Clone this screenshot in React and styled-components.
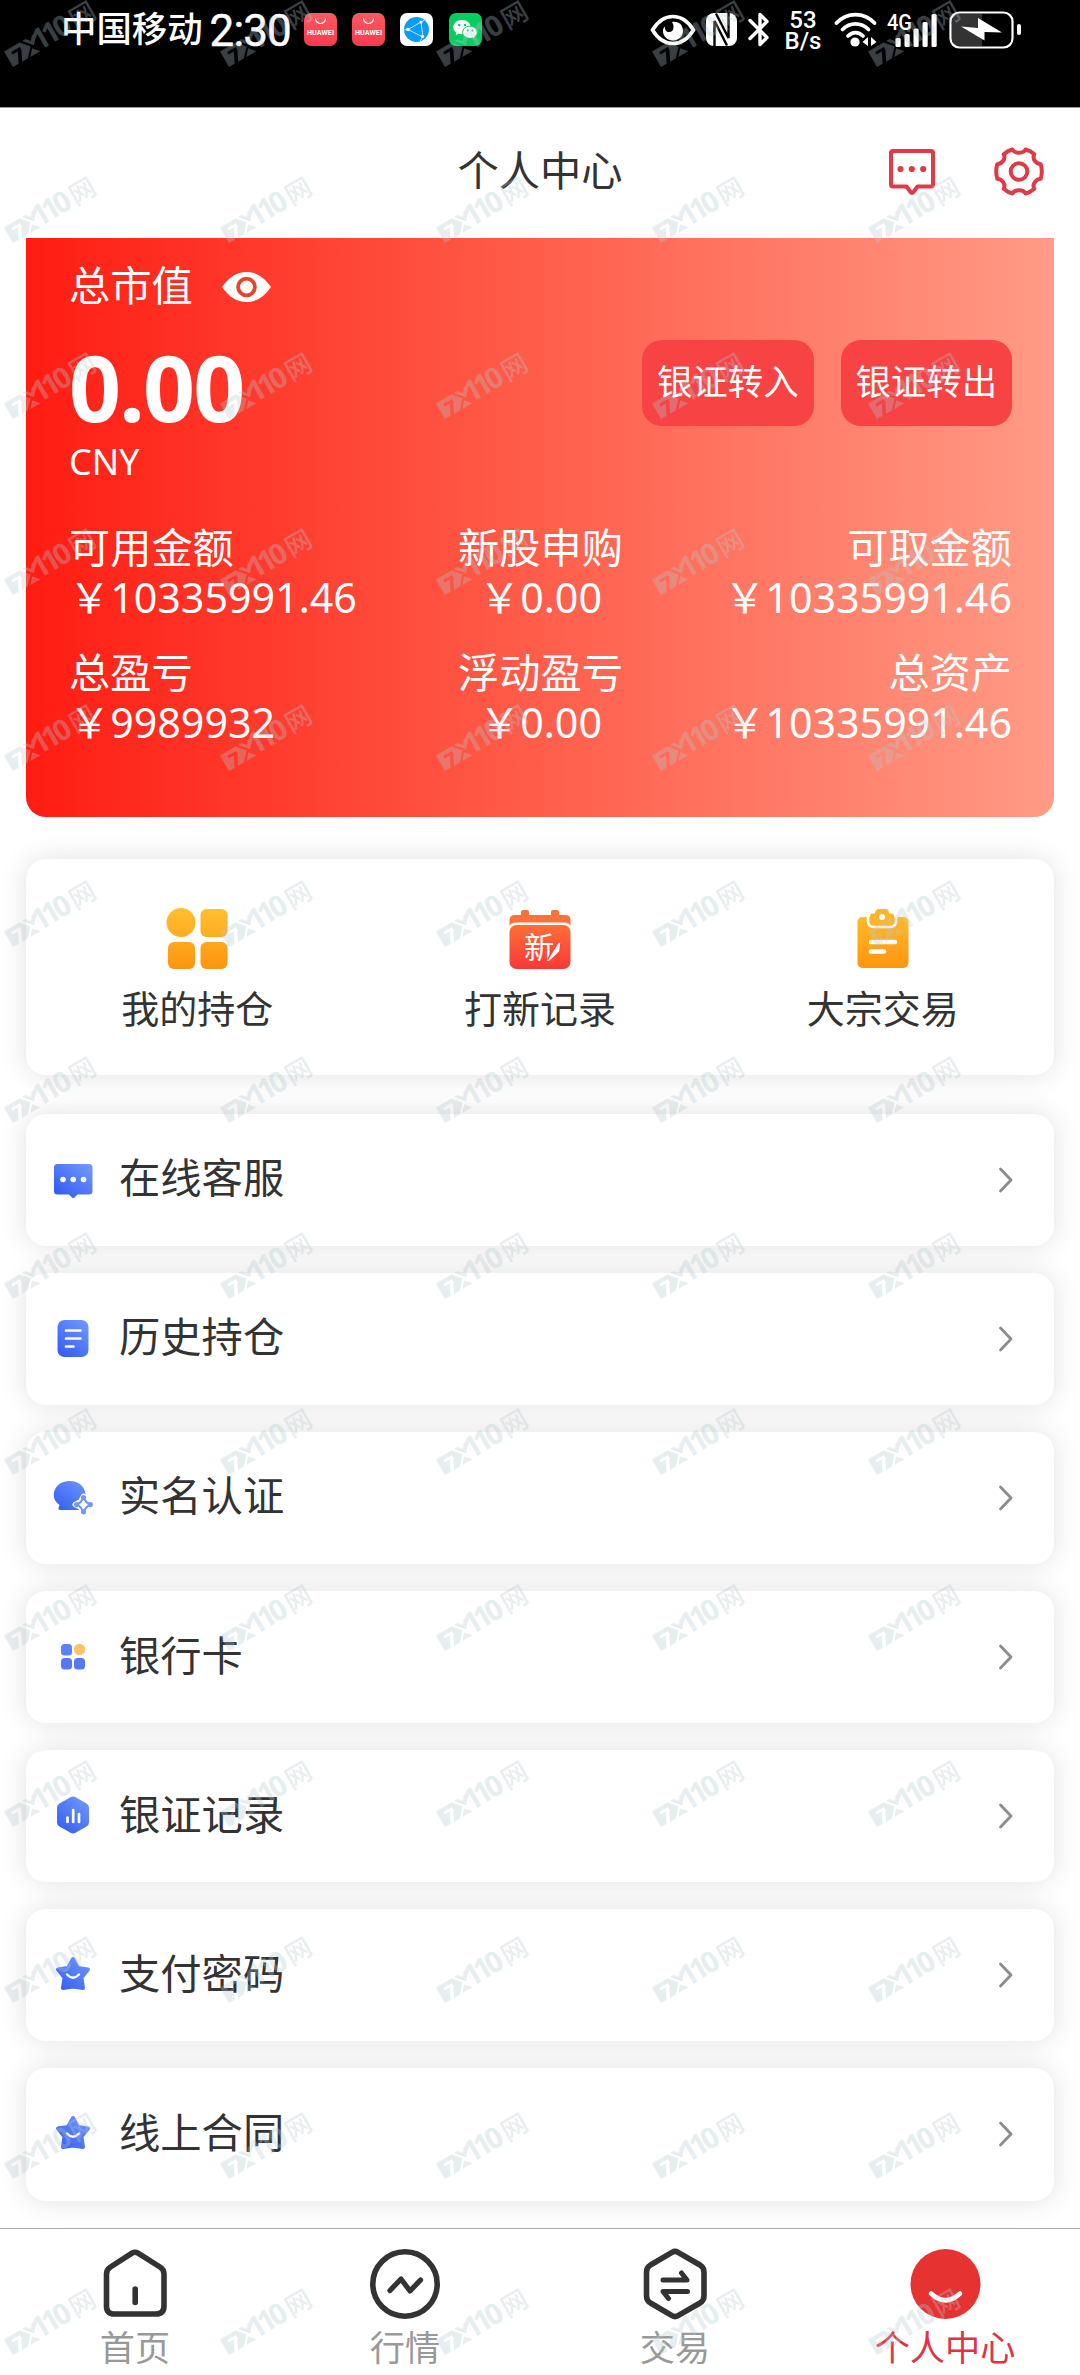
import React from 'react';
import styled, { createGlobalStyle } from 'styled-components';

const GlobalStyle = createGlobalStyle`
  *, *::before, *::after { box-sizing: border-box; }
  body {
    margin: 0;
    background: #fff;
    color: #333;
    font-family: "Noto Sans", "Noto Sans CJK SC", sans-serif;
  }
  svg { display: block; flex: none; overflow: visible; }
`;

const Page = styled.div`
  position: relative;
  width: 1080px;
  height: 2375px;
  overflow: hidden;
  display: flex;
  flex-direction: column;
  background: #fff;
`;

/* ---------- status bar ---------- */

const StatusBar = styled.div`
  height: 107px;
  flex: none;
  background: #000;
  color: #fff;
  display: flex;
  align-items: flex-start;
  justify-content: space-between;
  padding: 0 58px 0 61px;
  font-family: Roboto, "Noto Sans CJK SC", sans-serif;
`;

const StatusGroup = styled.div`
  display: flex;
  align-items: center;
  height: 59px;
`;

const Carrier = styled.span`
  font-size: 35.4px;
  font-weight: 500;
  line-height: 40px;
  margin-top: 1px;
`;

const Clock = styled.span`
  margin-left: 7px;
  width: 86px;
  font-size: 44px;
  font-weight: 400;
  -webkit-text-stroke: 0.5px #fff;
  line-height: 40px;
  letter-spacing: -0.9px;
  margin-top: 2px;
`;

const AppIcons = styled.div`
  display: flex;
  gap: 15.4px;
  margin-left: 8px;
`;

const NetSpeed = styled.div`
  display: flex;
  flex-direction: column;
  align-items: center;
  width: 38px;
  margin: 2px 12px 0 14px;
  font-size: 24px;
  font-weight: 500;
  line-height: 20.5px;
`;

const Gap = styled.span`
  width: ${(p) => p.$w}px;
`;

/* ---------- header ---------- */

const Header = styled.header`
  height: 131px;
  flex: none;
  display: grid;
  grid-template-columns: 1fr auto 1fr;
  align-items: center;
  padding: 0 36px 3px;
  border-top: 1px solid #999;
`;

const Title = styled.h1`
  grid-column: 2;
  margin: -4px 0 0;
  font-size: 41.3px;
  font-weight: 400;
  line-height: 50px;
`;

const HeaderActions = styled.div`
  display: flex;
  align-items: center;
  justify-content: flex-end;
  gap: 59px;
`;

/* ---------- balance card ---------- */

const BalanceCard = styled.section`
  height: 579px;
  flex: none;
  margin: 0 26px;
  padding: 22px 42px 0 43px;
  border-radius: 0 0 20px 20px;
  background: linear-gradient(90deg, #ff1c12 0%, #ff5e4b 50%, #ff9b86 100%);
  color: #fff;
`;

const BalanceLabel = styled.div`
  display: flex;
  align-items: center;
  gap: 29px;
  height: 50px;
  font-size: 41.3px;
  line-height: 50px;

  svg { margin-top: 3px; }
`;

const BalanceRow = styled.div`
  display: flex;
  justify-content: space-between;
  height: 116px;
  margin-top: 28px;
`;

const Balance = styled.div`
  font-size: 91px;
  font-weight: 700;
  line-height: 98px;
  letter-spacing: -1.8px;
`;

const Transfers = styled.div`
  display: flex;
  gap: 27px;
`;

const TransferButton = styled.button`
  width: 171.5px;
  height: 86px;
  margin-top: 2px;
  padding: 0 0 4px;
  border: 0;
  border-radius: 20px;
  background: #f74343;
  color: #fff;
  font-family: inherit;
  font-size: 35.4px;
  line-height: 40px;
`;

const Currency = styled.div`
  height: 50px;
  margin-top: -17px;
  font-size: 36px;
  line-height: 50px;
`;

const Stats = styled.div`
  display: grid;
  grid-template-columns: 1fr 1fr 1fr;
  row-gap: 25px;
  margin-top: 35px;
`;

const Stat = styled.div`
  font-size: 41.2px;
  line-height: 50px;
  text-align: ${(p) => p.$align};
  white-space: nowrap;
`;

/* ---------- shortcuts ---------- */

const Shortcuts = styled.section`
  display: grid;
  grid-template-columns: 1fr 1fr 1fr;
  height: 216px;
  flex: none;
  margin: 42px 26px 0;
  padding-top: 45px;
  border-radius: 20px;
  background: #fff;
  box-shadow: 0 0 28px rgba(0, 0, 0, 0.12);
`;

const Shortcut = styled.div`
  display: flex;
  flex-direction: column;
  align-items: center;
  gap: 15px;
  font-size: 38px;
  line-height: 50px;
`;

/* ---------- menu ---------- */

const Menu = styled.nav`
  display: flex;
  flex-direction: column;
  gap: 26.6px;
  margin: 38.5px 26px 0;
`;

const MenuItem = styled.div`
  display: flex;
  align-items: center;
  height: 132.5px;
  padding: 0 40px 0 27px;
  border-radius: 20px;
  background: #fff;
  box-shadow: 0 0 28px rgba(0, 0, 0, 0.12);
`;

const MenuLabel = styled.span`
  flex: 1;
  margin: -5px 0 0 26px;
  font-size: 41.3px;
  line-height: 50px;
`;

/* ---------- tab bar ---------- */

const TabBar = styled.footer`
  position: relative;
  display: grid;
  grid-template-columns: repeat(4, 1fr);
  height: 147px;
  flex: none;
  margin-top: auto;
  border-top: 1.5px solid #aaa;
  background: #fff;
`;

const Tab = styled.div`
  display: flex;
  flex-direction: column;
  align-items: center;
  padding-top: 16px;
  gap: 4px;
  font-size: 35.2px;
  line-height: 44px;
  color: ${(p) => (p.$active ? '#dc3644' : '#999')};
`;

/* ---------- watermark ---------- */

const WatermarkLayer = styled.div`
  position: absolute;
  inset: 0;
  display: grid;
  grid-template-columns: repeat(5, 216px);
  grid-auto-rows: 176px;
  pointer-events: none;
  opacity: 0.31;
`;

const WatermarkText = styled.text`
  font-family: "Open Sans", "Noto Sans CJK SC", sans-serif;
  font-weight: ${(p) => p.$weight};
  font-size: ${(p) => p.$size}px;
`;

const Watermark = () => (
  <svg width="110" height="74" viewBox="0 0 110 74" fill="#b5c9d0">
    <g transform="translate(13 67) rotate(-30)">
      <path
        fillRule="evenodd"
        d="M0 0V-18H18L25.500-9L17 0ZM6-14V-11H12L6.500 0H10.500L16-11V-14Z"
      />
      <path d="M21-18H25L28.500-13.500L32-18H38L29-8.500Z" />
      <path d="M20 0L26-6.500L31.500 0Z" />
      <WatermarkText x="30 41.500 54.500" y="-1" $size="29" $weight="700">110</WatermarkText>
      <WatermarkText x="73" y="-1" $size="26" $weight="500">网</WatermarkText>
    </g>
  </svg>
);

/* ---------- status icons ---------- */

const BagIcon = () => (
  <svg width="33" height="33" viewBox="0 0 33 33">
    <defs>
      <linearGradient id="bag" x1="0" y1="0" x2="0" y2="1">
        <stop offset="0" stopColor="#fb5a60" />
        <stop offset="1" stopColor="#f93a4c" />
      </linearGradient>
    </defs>
    <rect width="33" height="33" rx="7" fill="url(#bag)" />
    <path d="M11.500 5.500a5 5 0 0 0 10 0" fill="none" stroke="#fff" strokeWidth="1.200" />
    <text x="16.500" y="21.500" textAnchor="middle" textLength="27" lengthAdjust="spacingAndGlyphs" fontSize="6.500" fontWeight="700" fill="#fff">HUAWEI</text>
  </svg>
);

const GlobeIcon = () => (
  <svg width="33" height="33" viewBox="0 0 33 33">
    <rect width="33" height="33" rx="7" fill="#fff" />
    <circle cx="16.500" cy="16.500" r="12.500" fill="#0a9bf5" />
    <g fill="none" stroke="#bfe4ff" strokeWidth="1">
      <path d="M8 16.500L21 9L23 24Z" />
      <path d="M21 9L26 6M23 24L20 28M8 16.500L4 17" />
    </g>
    <g fill="#fff">
      <circle cx="8" cy="16.500" r="1.800" />
      <circle cx="21" cy="9" r="1.600" />
      <circle cx="22.500" cy="23.500" r="1.600" />
    </g>
  </svg>
);

const WechatIcon = () => (
  <svg width="33" height="33" viewBox="0 0 33 33">
    <rect width="33" height="33" rx="7" fill="#09cc5f" />
    <path d="M13 7c-5 0-8.700 3.200-8.700 7.200 0 2.300 1.200 4.200 3.100 5.500l-.8 2.600 3-1.500c1 .3 2.200.5 3.400.5 5 0 8.700-3.200 8.700-7.100S18 7 13 7z" fill="#fff" />
    <path d="M21 13.200c-4.200 0-7.300 2.700-7.300 6.100s3.100 6 7.300 6c1 0 1.900-.1 2.800-.4l2.400 1.300-.6-2.200c1.700-1.100 2.700-2.800 2.700-4.700 0-3.400-3.100-6.100-7.300-6.100z" fill="#fff" stroke="#09cc5f" strokeWidth="1" />
    <g fill="#09cc5f">
      <circle cx="10.200" cy="12" r="1.200" />
      <circle cx="16" cy="12" r="1.200" />
      <circle cx="18.700" cy="17.600" r="1" />
      <circle cx="23.400" cy="17.600" r="1" />
    </g>
  </svg>
);

const EyeComfortIcon = () => (
  <svg width="46" height="32" viewBox="0 0 46 32">
    <path d="M2.500 16C8 7 15 2.500 23 2.500S38 7 43.500 16C38 25 31 29.500 23 29.500S8 25 2.500 16Z" fill="none" stroke="#fff" strokeWidth="3.600" />
    <path d="M22 8C29 7 33 11 33 17c0 5.500-4.500 9.500-10 9.500S13 22.500 13 17c0-2 .7-3.500 1.700-4.800 0 4 1.800 5.800 4.300 5.800 3 0 4.500-2 4.500-5 0-2-.5-3.500-1.500-5Z" fill="#fff" />
  </svg>
);

const NfcIcon = () => (
  <svg width="31" height="33" viewBox="0 0 31 33">
    <rect width="31" height="33" rx="8" fill="#fff" />
    <path d="M8.500 33V8L21 32.500M22.500 0V25L10 0.500" fill="none" stroke="#000" strokeWidth="2.400" />
  </svg>
);

const BluetoothIcon = () => (
  <svg width="22" height="35" viewBox="0 0 22 35" fill="none" stroke="#fff" strokeWidth="3.400" strokeLinejoin="round" strokeLinecap="round">
    <path d="M2 8.500L19 25.500L12 32.500V2.500L19 9.500L2 26.500" />
  </svg>
);

const WifiIcon = () => (
  <svg width="43" height="35" viewBox="0 0 43 35">
    <g fill="none" stroke="#fff" strokeWidth="3.800" strokeLinecap="round">
      <path d="M2.500 11C13-.3 30-.3 40.500 11" />
      <path d="M8.500 17.500c7.500-7.500 18.500-7.500 26 0" />
      <path d="M14 24c4.500-4.500 10.500-4.500 15 0" />
    </g>
    <circle cx="21" cy="30" r="4.600" fill="#fff" />
    <path d="M34 25V34L28.500 30ZM37 25V34L42.500 30Z" fill="#fff" />
  </svg>
);

const SignalIcon = () => (
  <svg width="52" height="36" viewBox="0 0 52 36" fill="#fff">
    <text x="0" y="17.500" fontSize="22.500" fontWeight="500" textLength="25" lengthAdjust="spacingAndGlyphs">4G</text>
    <rect x="8.500" y="26" width="5.200" height="9" rx="1.500" />
    <rect x="17.500" y="22" width="5.200" height="13" rx="1.500" />
    <rect x="26.500" y="16.500" width="5.200" height="18.500" rx="1.500" />
    <rect x="35.500" y="10" width="5.200" height="25" rx="1.500" />
    <rect x="44.500" y="2" width="5.200" height="33" rx="1.500" />
  </svg>
);

const BatteryIcon = () => (
  <svg width="73" height="38" viewBox="0 0 73 38">
    <path d="M10 3H33V35H10Q3 35 3 28V10Q3 3 10 3Z" fill="#333" />
    <rect x="1.500" y="1.500" width="62" height="35" rx="9" fill="none" stroke="#fff" strokeWidth="2.200" />
    <rect x="68" y="13" width="4" height="11" rx="2" fill="#fff" />
    <path d="M12 15.500L29 17V7L53 21.500L35.500 21V29.500Z" fill="#fff" />
  </svg>
);

/* ---------- header icons ---------- */

const MessageIcon = () => (
  <svg width="46" height="46" viewBox="0 0 46 46">
    <path d="M4 2H42Q44 2 44 4V35.500Q44 37.500 42 37.500H28.500L24.500 43Q23 44.800 21.500 43L17.500 37.500H4Q2 37.500 2 35.500V4Q2 2 4 2Z" fill="none" stroke="#df3a48" strokeWidth="4" strokeLinejoin="round" />
    <g fill="#df3a48">
      <circle cx="11.500" cy="20" r="3.100" />
      <circle cx="22.800" cy="20" r="3.100" />
      <circle cx="34.200" cy="20" r="3.100" />
    </g>
  </svg>
);

const GearIcon = () => (
  <svg width="50" height="49" viewBox="0 0 50 49" fill="none" stroke="#df3a48" strokeWidth="4" strokeLinejoin="round">
    <path d="M18.500 2.500C20.500 6.800 29.500 6.800 31.500 2.500Q36 3.500 40.300 7.300C38 11.500 41.500 16.800 46.800 17.200Q48.800 24.500 46.800 31.800C41.500 32.200 38 37.500 40.300 41.700Q36 45.500 31.500 46.500C29.500 42.200 20.500 42.200 18.500 46.500Q14 45.500 9.700 41.700C12 37.500 8.500 32.200 3.200 31.800Q1.200 24.500 3.200 17.200C8.500 16.800 12 11.500 9.700 7.300Q14 3.500 18.500 2.500Z" />
    <circle cx="25" cy="24.500" r="8.300" />
  </svg>
);

const EyeIcon = () => (
  <svg width="49" height="30" viewBox="0 0 49 30">
    <path d="M0 15C7 5 15 0 24.500 0S42 5 49 15C42 25 34 30 24.500 30S7 25 0 15Z" fill="#fff" />
    <circle cx="24.500" cy="15" r="8.400" fill="none" stroke="#e8432f" strokeWidth="3.800" />
  </svg>
);

/* ---------- shortcut icons ---------- */

const OrangeGradient = ({ id }) => (
  <linearGradient id={id} x1="0" y1="0" x2="0" y2="64" gradientUnits="userSpaceOnUse">
    <stop offset="0" stopColor="#ffc333" />
    <stop offset="1" stopColor="#ff950f" />
  </linearGradient>
);

const HoldingsIcon = () => (
  <svg width="64" height="64" viewBox="0 0 64 64">
    <defs><OrangeGradient id="holdings" /></defs>
    <g fill="url(#holdings)">
      <circle cx="16" cy="18.500" r="14.500" />
      <rect x="35.500" y="5" width="27" height="28" rx="6" />
      <rect x="3" y="38" width="27" height="27" rx="6" />
      <rect x="35.500" y="38" width="27" height="27" rx="6" />
    </g>
  </svg>
);

const NewShareIcon = () => (
  <svg width="64" height="64" viewBox="0 0 64 64">
    <defs>
      <linearGradient id="share" x1="0" y1="0" x2="0" y2="1">
        <stop offset="0" stopColor="#ff6f37" />
        <stop offset="1" stopColor="#f83838" />
      </linearGradient>
    </defs>
    <path d="M1.500 22V16Q1.500 11 7 11H13V8Q13 6 15 6H19Q21 6 21 8V11H43V8Q43 6 45 6H49Q51 6 51 8V11H57Q62.500 11 62.500 16V22Q61 18.500 56 18.500H8Q3 18.500 1.500 22Z" fill="#ff7139" />
    <rect x="1.500" y="21" width="61" height="44" rx="7" fill="url(#share)" />
    <text x="16" y="54" fontSize="30" fill="#fff">新</text>
    <path d="M42 57L52 39" stroke="#fb4a37" strokeWidth="7" />
    <path d="M41 56L51.500 39L50.500 47Z" fill="#fff" stroke="#fff" strokeWidth="1.500" />
  </svg>
);

const BlockTradeIcon = () => (
  <svg width="64" height="64" viewBox="0 0 64 64">
    <defs><OrangeGradient id="trade" /></defs>
    <rect x="6.500" y="13" width="51" height="51" rx="5" fill="url(#trade)" />
    <path d="M17 12V17Q17 23 23 23H39Q45 23 45 17V12" fill="none" stroke="#fff" strokeWidth="2.600" />
    <path d="M19 12Q19 9.500 21.500 9.500H24Q24 5 28 5H34.500Q38 5 38 9.500H40.500Q43 9.500 43 12V16Q43 20.500 38.500 20.500H23.500Q19 20.500 19 16Z" fill="#fdb52c" />
    <circle cx="31" cy="13" r="3" fill="#fff" />
    <path d="M20 38H44M20 47.500H33" stroke="#fff" strokeWidth="4.600" strokeLinecap="round" />
  </svg>
);

/* ---------- menu icons ---------- */

const BlueGradient = ({ id }) => (
  <linearGradient id={id} x1="38" y1="2" x2="6" y2="40" gradientUnits="userSpaceOnUse">
    <stop offset="0" stopColor="#769dff" />
    <stop offset="1" stopColor="#3059f0" />
  </linearGradient>
);

const MenuSvg = ({ children, id }) => (
  <svg width="40" height="42" viewBox="0 0 40 42">
    <defs><BlueGradient id={id} /></defs>
    {children}
  </svg>
);

const ServiceIcon = () => (
  <MenuSvg id="m-service">
    <path d="M4.500 5H36Q39.500 5 39.500 8.500V32Q39.500 35.500 36 35.500H24.500L21.500 38.500Q20.200 39.500 19 38.500L16 35.500H4.500Q1 35.500 1 32V8.500Q1 5 4.500 5Z" fill="url(#m-service)" />
    <g fill="#fff">
      <circle cx="10" cy="20.500" r="2.800" />
      <circle cx="20.200" cy="20.500" r="2.800" />
      <circle cx="30.500" cy="20.500" r="2.800" />
    </g>
  </MenuSvg>
);

const HistoryIcon = () => (
  <MenuSvg id="m-history">
    <rect x="4.500" y="2" width="31" height="37" rx="7" fill="url(#m-history)" />
    <path d="M13 12.500H27.500M13 20.500H27.500M13 28.500H20.500" stroke="#fff" strokeWidth="2.600" strokeLinecap="round" />
  </MenuSvg>
);

const VerifyIcon = () => (
  <MenuSvg id="m-verify">
    <path d="M16.500 4C26 4 32.500 10 32.500 18Q32.500 23 29 27L26 33H7Q5 33 5.500 31L6.500 28C2.500 25 .8 22 .8 18 .8 10 7.500 4 16.500 4Z" fill="url(#m-verify)" />
    <path d="M30.500 19L33.500 24.500L39 27.500L33.500 30.500L30.500 36L27.500 30.500L22 27.500L27.500 24.500Z" fill="#fff" stroke="#fff" strokeWidth="5" strokeLinejoin="round" />
    <path d="M30.500 21L33.500 25.200L37 27.500L33.500 30.200L30.500 34.500L27.500 30.200L24 27.500L27.500 25.200Z" fill="#fff" stroke="#6a91fb" strokeWidth="2" strokeLinejoin="round" />
    <g fill="#7297fb">
      <circle cx="30.500" cy="20.500" r="2.600" />
      <circle cx="37.300" cy="27.600" r="2.600" />
      <circle cx="30.500" cy="34.800" r="2.600" />
      <circle cx="23.700" cy="27.600" r="2.600" />
    </g>
  </MenuSvg>
);

const CardsIcon = () => (
  <MenuSvg id="m-cards">
    <rect x="8" y="8" width="11" height="11.500" rx="3.500" fill="#5b82f7" />
    <circle cx="26.500" cy="13.500" r="5.700" fill="#fdc36c" />
    <rect x="8" y="22" width="11" height="11.500" rx="3.500" fill="#5379f6" />
    <rect x="21" y="22" width="11" height="11.500" rx="3.500" fill="#5379f6" />
  </MenuSvg>
);

const RecordsIcon = () => (
  <MenuSvg id="m-records">
    <path d="M17.500 2.200Q20 .8 22.500 2.200L33.500 8.500Q36 10 36 12.800V27.200Q36 30 33.500 31.500L22.500 37.800Q20 39.200 17.500 37.800L6.500 31.500Q4 30 4 27.200V12.800Q4 10 6.500 8.500Z" fill="url(#m-records)" />
    <path d="M14.500 22.500V27M20.200 15V27M26 19V27" stroke="#fff" strokeWidth="2.700" strokeLinecap="round" />
  </MenuSvg>
);

const StarIcon = ({ id }) => (
  <MenuSvg id={id}>
    <path d="M20 5L25 14L35 15.500L28.500 23.500L30 34L20 32.500L10 34L11.500 23.500L5 15.500L15 14Z" fill={`url(#${id})`} stroke={`url(#${id})`} strokeWidth="4" strokeLinejoin="round" />
    <path d="M14 20.500Q20 27 26 20.500" fill="none" stroke="#fff" strokeWidth="2.400" strokeLinecap="round" />
  </MenuSvg>
);

const Chevron = () => (
  <svg width="16" height="26" viewBox="0 0 16 26">
    <path d="M2.500 2L13 13L2.500 24" fill="none" stroke="#8c8c8c" strokeWidth="2.800" strokeLinecap="round" strokeLinejoin="round" />
  </svg>
);

/* ---------- tab icons ---------- */

const TabSvg = ({ children }) => (
  <svg width="72" height="76" viewBox="0 0 72 76" fill="none" stroke="#333" strokeWidth="5.600" strokeLinecap="round" strokeLinejoin="round">
    {children}
  </svg>
);

const HomeTabIcon = () => (
  <TabSvg>
    <path d="M33 8.200Q36 6.300 39 8.200L61 22Q65 24.500 65 29V61Q65 69 57 69H15.500Q7.500 69 7.500 61V29Q7.500 24.500 11.500 22Z" />
    <path d="M36.200 44V57.500" />
  </TabSvg>
);

const MarketTabIcon = () => (
  <TabSvg>
    <circle cx="36" cy="39" r="32.200" />
    <path d="M21 45.500L32 34L41 46L51.500 35" strokeWidth="5.200" />
  </TabSvg>
);

const TradeTabIcon = () => (
  <TabSvg>
    <path d="M33 7.300Q36 5.500 39 7.300L61 20Q65 22.500 65 27V51Q65 55.500 61 58L39 70.700Q36 72.500 33 70.700L11.500 58Q7.500 55.500 7.500 51V27Q7.500 22.500 11.500 20Z" />
    <path d="M24 35H48L42.500 28M48.500 46.500H24L29.500 53.500" strokeWidth="5" />
  </TabSvg>
);

const ProfileTabIcon = () => (
  <TabSvg>
    <circle cx="36.500" cy="39" r="35" fill="#e73232" stroke="none" />
    <path d="M22 48.500Q36.500 62 51 48.500" stroke="#fff" strokeWidth="4.600" />
  </TabSvg>
);

/* ---------- data ---------- */

const STATS = [
  { label: '可用金额', value: '￥10335991.46', align: 'left' },
  { label: '新股申购', value: '￥0.00', align: 'center' },
  { label: '可取金额', value: '￥10335991.46', align: 'right' },
  { label: '总盈亏', value: '￥9989932', align: 'left' },
  { label: '浮动盈亏', value: '￥0.00', align: 'center' },
  { label: '总资产', value: '￥10335991.46', align: 'right' },
];

const SHORTCUTS = [
  { label: '我的持仓', icon: <HoldingsIcon /> },
  { label: '打新记录', icon: <NewShareIcon /> },
  { label: '大宗交易', icon: <BlockTradeIcon /> },
];

const MENU = [
  { label: '在线客服', icon: <ServiceIcon /> },
  { label: '历史持仓', icon: <HistoryIcon /> },
  { label: '实名认证', icon: <VerifyIcon /> },
  { label: '银行卡', icon: <CardsIcon /> },
  { label: '银证记录', icon: <RecordsIcon /> },
  { label: '支付密码', icon: <StarIcon id="m-star-a" /> },
  { label: '线上合同', icon: <StarIcon id="m-star-b" /> },
];

const TABS = [
  { label: '首页', icon: <HomeTabIcon /> },
  { label: '行情', icon: <MarketTabIcon /> },
  { label: '交易', icon: <TradeTabIcon /> },
  { label: '个人中心', icon: <ProfileTabIcon />, active: true },
];

export default function App() {
  return (
    <Page>
      <GlobalStyle />
      <StatusBar>
        <StatusGroup>
          <Carrier>中国移动</Carrier>
          <Clock>2:30</Clock>
          <AppIcons>
            <BagIcon />
            <BagIcon />
            <GlobeIcon />
            <WechatIcon />
          </AppIcons>
        </StatusGroup>
        <StatusGroup>
          <EyeComfortIcon />
          <Gap $w={10} />
          <NfcIcon />
          <Gap $w={11} />
          <BluetoothIcon />
          <NetSpeed>
            <span>53</span>
            <span>B/s</span>
          </NetSpeed>
          <WifiIcon />
          <Gap $w={10} />
          <SignalIcon />
          <Gap $w={10} />
          <BatteryIcon />
        </StatusGroup>
      </StatusBar>

      <Header>
        <Title>个人中心</Title>
        <HeaderActions>
          <MessageIcon />
          <GearIcon />
        </HeaderActions>
      </Header>

      <BalanceCard>
        <BalanceLabel>
          总市值
          <EyeIcon />
        </BalanceLabel>
        <BalanceRow>
          <Balance>0.00</Balance>
          <Transfers>
            <TransferButton>银证转入</TransferButton>
            <TransferButton>银证转出</TransferButton>
          </Transfers>
        </BalanceRow>
        <Currency>CNY</Currency>
        <Stats>
          {STATS.map((s) => (
            <Stat key={s.label} $align={s.align}>
              <div>{s.label}</div>
              <div>{s.value}</div>
            </Stat>
          ))}
        </Stats>
      </BalanceCard>

      <Shortcuts>
        {SHORTCUTS.map((s) => (
          <Shortcut key={s.label}>
            {s.icon}
            <span>{s.label}</span>
          </Shortcut>
        ))}
      </Shortcuts>

      <Menu>
        {MENU.map((m) => (
          <MenuItem key={m.label}>
            {m.icon}
            <MenuLabel>{m.label}</MenuLabel>
            <Chevron />
          </MenuItem>
        ))}
      </Menu>

      <TabBar>
        {TABS.map((t) => (
          <Tab key={t.label} $active={t.active}>
            {t.icon}
            <span>{t.label}</span>
          </Tab>
        ))}
      </TabBar>

      <WatermarkLayer aria-hidden="true">
        {Array.from({ length: 70 }, (_, i) => (
          <Watermark key={i} />
        ))}
      </WatermarkLayer>
    </Page>
  );
}
